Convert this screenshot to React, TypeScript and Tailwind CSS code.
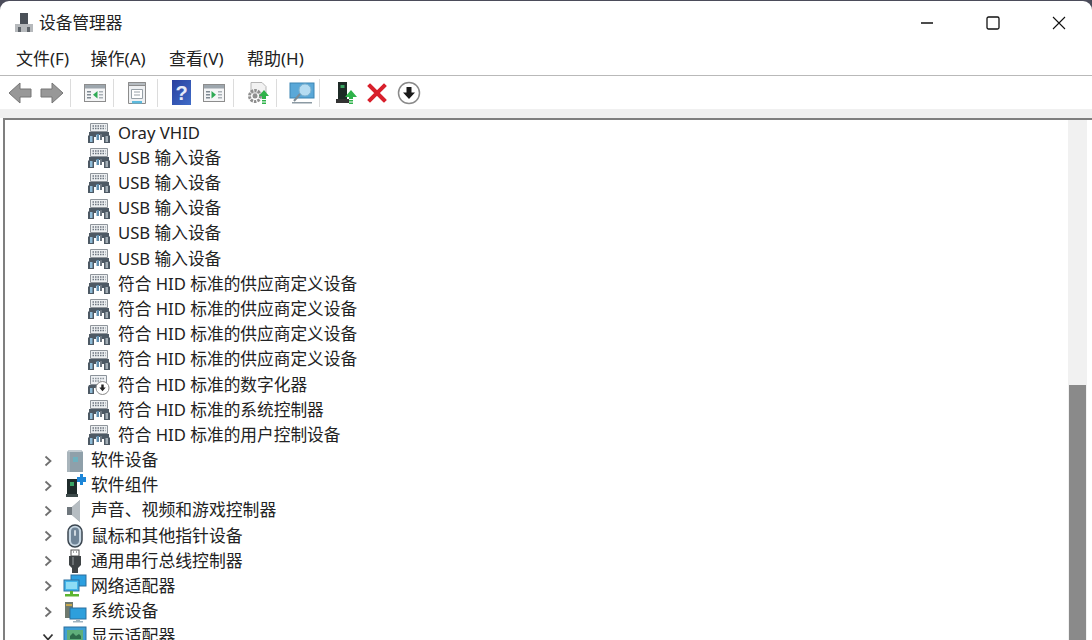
const font = { fontFamily: '"Noto Sans", "Noto Sans CJK SC", sans-serif' };

const hidRows = [
  "Oray VHID",
  "USB 输入设备",
  "USB 输入设备",
  "USB 输入设备",
  "USB 输入设备",
  "USB 输入设备",
  "符合 HID 标准的供应商定义设备",
  "符合 HID 标准的供应商定义设备",
  "符合 HID 标准的供应商定义设备",
  "符合 HID 标准的供应商定义设备",
  "符合 HID 标准的数字化器",
  "符合 HID 标准的系统控制器",
  "符合 HID 标准的用户控制设备",
];

const menus = ["文件(F)", "操作(A)", "查看(V)", "帮助(H)"];

function HidIcon() {
  return (
    <svg width="24" height="22" viewBox="0 0 24 22">
      <path d="M3.500 1.500h17v8h-17z" fill="#eceff1" stroke="#8f959b" />
      <path d="M5.500 4h13M5.500 6.500h13" stroke="#6d7680" strokeWidth="1.500" strokeDasharray="1.500 1" />
      <path d="M2 10h20v3l1 1v7h-6v-6h-2v-2H9v2H7v6H1v-7l1-1z" fill="#4d5964" />
      <path d="M3 14h2.500v6H3z" fill="#8fbcd8" />
      <path d="M9.500 12h2.500v6H9.500z" fill="#5f8fb0" />
      <path d="M13 12h2v6h-2z" fill="#6d7680" />
      <path d="M18.500 14H21v6h-2.500z" fill="#a3aeb6" />
    </svg>
  );
}

function DigitizerIcon() {
  return (
    <svg width="24" height="22" viewBox="0 0 24 22">
      <path d="M3.500 1.500h16v9h-16z" fill="#eef1f4" stroke="#8b929a" />
      <path d="M5.500 4.500h12M5.500 7h8" stroke="#8a939b" strokeWidth="1.300" strokeDasharray="1.500 1" />
      <path d="M2 11h9v3H7v6H1v-7z" fill="#4d5964" />
      <path d="M3 14h2.500v5H3z" fill="#8fbcd8" />
      <circle cx="15.500" cy="14" r="6.500" fill="#fff" stroke="#8a8a8a" />
      <path d="M14.300 10.500h2.400v3h2l-3.200 3.700-3.200-3.700h2z" fill="#222" />
    </svg>
  );
}

function SoftwareDeviceIcon() {
  return (
    <svg width="22" height="24" viewBox="0 0 22 24">
      <path d="M5 1h12l2 2v20H3V3z" fill="#8fa0aa" />
      <path d="M5 1h12l1 2H4z" fill="#c3ccd2" />
      <path d="M3 3h3v20H3z" fill="#a9b5bc" />
      <rect x="9" y="8" width="5" height="5" fill="#6eb1bf" />
    </svg>
  );
}

function SoftwareComponentIcon() {
  return (
    <svg width="22" height="24" viewBox="0 0 22 24">
      <path d="M3 5h10v15H3z" fill="#1f2b2b" />
      <path d="M2 20h12v3H2z" fill="#3d4a4a" />
      <rect x="6" y="8" width="4" height="4" fill="#3aa565" />
      <path d="M13 3h3V0h3v3h3v5h-3v3h-3V8h-3z" fill="#1d86d8" />
    </svg>
  );
}

function SoundIcon() {
  return (
    <svg width="22" height="24" viewBox="0 0 22 24">
      <path d="M3 8h5l8-7v22l-8-7H3z" fill="#8d959b" />
      <path d="M8 8l8-7v22l-8-7z" fill="#b6bdc2" />
      <path d="M3 8h5v8H3z" fill="#6f777d" />
    </svg>
  );
}

function MouseIcon() {
  return (
    <svg width="22" height="24" viewBox="0 0 22 24">
      <rect x="4" y="1" width="14" height="22" rx="7" fill="#c6d6e2" stroke="#3b4650" strokeWidth="1.500" />
      <rect x="7" y="3.500" width="8" height="17" rx="4" fill="#6f8497" />
      <rect x="10" y="6" width="2" height="6" rx="1" fill="#cfd8df" />
    </svg>
  );
}

function UsbIcon() {
  return (
    <svg width="22" height="24" viewBox="0 0 22 24">
      <rect x="7" y="1" width="8" height="6" fill="#fff" stroke="#555" />
      <path d="M9 3h1M12 3h1" stroke="#555" />
      <path d="M5 7h12v9l-3 3v5H8v-5l-3-3z" fill="#3e4345" />
      <path d="M8 8h2v8H8z" fill="#6b7072" />
    </svg>
  );
}

function NetworkIcon() {
  return (
    <svg width="26" height="24" viewBox="0 0 26 24">
      <rect x="9" y="1" width="15" height="11" fill="#2b9fe0" stroke="#2a6f9e" />
      <rect x="2" y="6" width="15" height="11" fill="#42b4ea" stroke="#2a6f9e" />
      <rect x="4" y="8" width="11" height="7" fill="#8edcf5" />
      <path d="M8 17h3v3H8zM3 20h14v2.500H3z" fill="#5cb531" />
    </svg>
  );
}

function SystemIcon() {
  return (
    <svg width="24" height="24" viewBox="0 0 24 24">
      <path d="M2 2h8v16H2z" fill="#6f7a6f" />
      <path d="M3 4h6v2H3z" fill="#c9a94f" />
      <rect x="7" y="8" width="16" height="11" fill="#2d9fdc" stroke="#2a6f9e" />
      <path d="M13 19h4v2h3v1.500H10V21h3z" fill="#9fb3c0" />
    </svg>
  );
}

function DisplayIcon() {
  return (
    <svg width="24" height="24" viewBox="0 0 24 24">
      <rect x="1" y="2" width="22" height="16" fill="#3f9fd6" stroke="#2a6f9e" />
      <rect x="4" y="5" width="16" height="10" fill="#5fae7a" />
      <path d="M7 11l3-3 3 3 3-2 2 2v3H7z" fill="#2d6b4a" />
    </svg>
  );
}

function Chevron({ open }: { open?: boolean }) {
  return (
    <svg width="12" height="12" viewBox="0 0 12 12" fill="none" stroke="#6f6f6f" strokeWidth="1.800">
      {open ? <path d="M1.500 3.500L6 8.500l4.500-5" stroke="#333" /> : <path d="M3.500 1.500L8.500 6l-5 4.500" />}
    </svg>
  );
}

function ArrowButton({ right, className }: { right?: boolean; className?: string }) {
  return (
    <svg width="24" height="22" viewBox="0 0 24 22" className={className}>
      <path
        d={right ? "M1 7h11V1l11 10-11 10v-6H1z" : "M23 7H12V1L1 11l11 10v-6h11z"}
        fill="#989898"
        stroke="#767676"
      />
    </svg>
  );
}

function PanelIcon({ arrow, className }: { arrow: "left" | "right"; className?: string }) {
  return (
    <svg width="24" height="22" viewBox="0 0 24 22" className={className}>
      <rect x="1.500" y="2.500" width="21" height="17" fill="#f4f5f6" stroke="#8d8d8d" />
      <rect x="2" y="3" width="20" height="3.500" fill="#9da6ad" />
      <path d="M4 9h4v1.500H4zM4 12h4v1.500H4zM4 15h4v1.500H4z" fill="#7f8a93" />
      <path d="M16 9h4v1.500h-4zM16 12h4v1.500h-4zM16 15h4v1.500h-4z" fill="#a9b1b7" />
      <path d={arrow === "left" ? "M14.500 9v7.500l-4.500-3.700z" : "M9.500 9v7.500l4.500-3.700z"} fill="#2faa55" />
    </svg>
  );
}

function Toolbar() {
  return (
    <div className="flex h-[33px] shrink-0 items-center bg-white pl-2">
      <ArrowButton />
      <ArrowButton right className="ml-2" />
      <div className="ml-[6px] h-[28px] w-px bg-[#dcdcdc]" />
      <PanelIcon arrow="left" className="ml-[12px]" />
      <div className="ml-[6px] h-[28px] w-px bg-[#dcdcdc]" />
      <svg width="24" height="24" viewBox="0 0 24 24" className="ml-[11px]">
        <path d="M3.500 1.500h17v21h-17z" fill="#eef0f2" stroke="#8c8c8c" />
        <path d="M3.500 1.500h17v3h-17z" fill="#b5bbc0" stroke="#8c8c8c" />
        <path d="M6.500 8.500h11v9h-11z" fill="#fff" stroke="#98a1a8" />
        <path d="M9 11h6M9 14h6" stroke="#98a1a8" />
        <path d="M7 20h10v2.500H7z" fill="#5cb9dc" />
      </svg>
      <div className="ml-[8px] h-[28px] w-px bg-[#dcdcdc]" />
      <div
        className="ml-[14px] flex h-[25px] w-[19px] items-center justify-center bg-gradient-to-br from-[#2a3f9e] to-[#3f6cc8] text-[20px] font-bold text-[#e8ecf8]"
        style={{ fontFamily: '"Liberation Sans", sans-serif' }}
      >
        ?
      </div>
      <PanelIcon arrow="right" className="ml-[11px]" />
      <div className="ml-[7px] h-[28px] w-px bg-[#dcdcdc]" />
      <svg width="24" height="24" viewBox="0 0 24 24" className="ml-[12px]">
        <path d="M5 1.500h11l4 4V12H5z" fill="#f2f2f2" stroke="#b5b5b5" />
        <circle cx="9" cy="15" r="5.500" fill="none" stroke="#8f8f8f" strokeWidth="3" strokeDasharray="2.500 1" />
        <circle cx="9" cy="15" r="2.500" fill="#8f8f8f" />
        <path d="M18 9l5 6h-3v3h-4v-3h-3z" fill="#2fb24a" />
        <path d="M16 19h4v1.500h-4zM16 21.500h4V23h-4z" fill="#2fb24a" />
      </svg>
      <div className="ml-[6px] h-[28px] w-px bg-[#dcdcdc]" />
      <svg width="26" height="24" viewBox="0 0 26 24" className="ml-[12px]">
        <rect x="1" y="2" width="24" height="15" fill="#5aa8d8" stroke="#3d85b3" />
        <circle cx="16" cy="9" r="6" fill="#b5dcf2" stroke="#7fb3d0" />
        <path d="M11 13l-6 7" stroke="#7d8a93" strokeWidth="2" />
        <path d="M3 21h20v1.500H3z" fill="#8c9aa3" />
      </svg>
      <div className="ml-[4px] h-[28px] w-px bg-[#dcdcdc]" />
      <svg width="24" height="24" viewBox="0 0 24 24" className="ml-[14px]">
        <path d="M4 1h9v17H4z" fill="#1d2a26" />
        <rect x="6.500" y="4" width="4" height="3" fill="#37a35f" />
        <path d="M2 18h13v4H2z" fill="#333" />
        <path d="M17 9l6 7h-4v2h-4v-2h-4z" fill="#2fb24a" />
        <path d="M15 19h4v1.500h-4zM15 21.500h4V23h-4z" fill="#2fb24a" />
      </svg>
      <svg width="20" height="20" viewBox="0 0 20 20" className="ml-[9px]">
        <path d="M3 3l14 14M17 3L3 17" stroke="#d8202c" strokeWidth="4" strokeLinecap="square" />
      </svg>
      <svg width="24" height="24" viewBox="0 0 24 24" className="ml-[10px]">
        <circle cx="12" cy="12" r="10.500" fill="#fff" stroke="#8a8a8a" strokeWidth="1.500" />
        <path d="M9.500 6h5v5.500H18L12 18l-6-6.500h3.500z" fill="#1a1a1a" />
      </svg>
    </div>
  );
}

function HidRow({ label, digitizer }: { label: string; digitizer?: boolean }) {
  return (
    <div className="flex h-[25.2px] items-center pl-[77px]">
      <div className="flex w-[36px] justify-start pl-[5px]">{digitizer ? <DigitizerIcon /> : <HidIcon />}</div>
      <span>{label}</span>
    </div>
  );
}

function CategoryRow({ label, icon, open }: { label: string; icon: React.ReactNode; open?: boolean }) {
  return (
    <div className="flex h-[25.2px] items-center pl-[37px]">
      <div className="flex w-[12px] justify-center"><Chevron open={open} /></div>
      <div className="flex w-[37px] justify-center pr-[2px] pl-[6px]">{icon}</div>
      <span className="text-[16.85px]">{label}</span>
    </div>
  );
}

export default function App() {
  return (
    <div className="h-[640px] w-[1092px] overflow-hidden bg-[#4b4c5a] pt-[1px] text-[16.7px] leading-none text-[#222]" style={font}>
      <div className="flex h-[639px] flex-col overflow-hidden rounded-t-[9px] bg-white">
        {/* title bar */}
        <div className="flex h-[42px] shrink-0 items-center pl-[14px] pt-[2px]">
          <svg width="20" height="22" viewBox="0 0 20 22">
            <path d="M6 1h8v11H6z" fill="#4a5058" />
            <path d="M1 12h18v8H1z" fill="#b6b9bc" />
            <path d="M4 15h3v5H4zM13 15h3v5h-3z" fill="#5f656b" />
          </svg>
          <span className="ml-[5px]">设备管理器</span>
          <div className="ml-auto flex items-center">
            <svg width="14" height="14" viewBox="0 0 14 14" className="mr-[52px]">
              <path d="M1 7h12" stroke="#111" strokeWidth="1.300" />
            </svg>
            <svg width="14" height="14" viewBox="0 0 14 14" className="mr-[52px]">
              <rect x="1" y="1" width="12" height="12" rx="1.500" fill="none" stroke="#111" strokeWidth="1.300" />
            </svg>
            <svg width="14" height="14" viewBox="0 0 14 14" className="mr-[26px]">
              <path d="M1 1l12 12M13 1L1 13" stroke="#111" strokeWidth="1.100" />
            </svg>
          </div>
        </div>

        {/* menu */}
        <div className="flex h-[33px] shrink-0 items-center gap-[23.5px] border-b border-[#b9b9b9] pb-[1px] pl-[16px] text-[17px]">
          {menus.map((m) => (
            <span key={m} className="first:-mr-[2px]">{m}</span>
          ))}
        </div>

        <Toolbar />
        <div className="h-[9px] shrink-0 bg-[#f0f0f0]" />

        {/* device tree */}
        <div className="ml-[3px] flex min-h-0 flex-1 border-t-2 border-l-2 border-[#7f7f7f] bg-white">
          <div className="min-w-0 flex-1 overflow-hidden pt-[0.5px]">
            {hidRows.map((label, i) => (
              <HidRow key={i} label={label} digitizer={i === 10} />
            ))}
            <CategoryRow label="软件设备" icon={<SoftwareDeviceIcon />} />
            <CategoryRow label="软件组件" icon={<SoftwareComponentIcon />} />
            <CategoryRow label="声音、视频和游戏控制器" icon={<SoundIcon />} />
            <CategoryRow label="鼠标和其他指针设备" icon={<MouseIcon />} />
            <CategoryRow label="通用串行总线控制器" icon={<UsbIcon />} />
            <CategoryRow label="网络适配器" icon={<NetworkIcon />} />
            <CategoryRow label="系统设备" icon={<SystemIcon />} />
            <CategoryRow label="显示适配器" icon={<DisplayIcon />} open />
          </div>
          {/* scrollbar */}
          <div className="mr-[5px] flex w-[19px] shrink-0 flex-col bg-[#f1f1f1] px-[1px]">
            <div className="h-[265px] shrink-0" />
            <div className="flex-1 bg-[#8a8a8a]" />
          </div>
        </div>
      </div>
    </div>
  );
}
